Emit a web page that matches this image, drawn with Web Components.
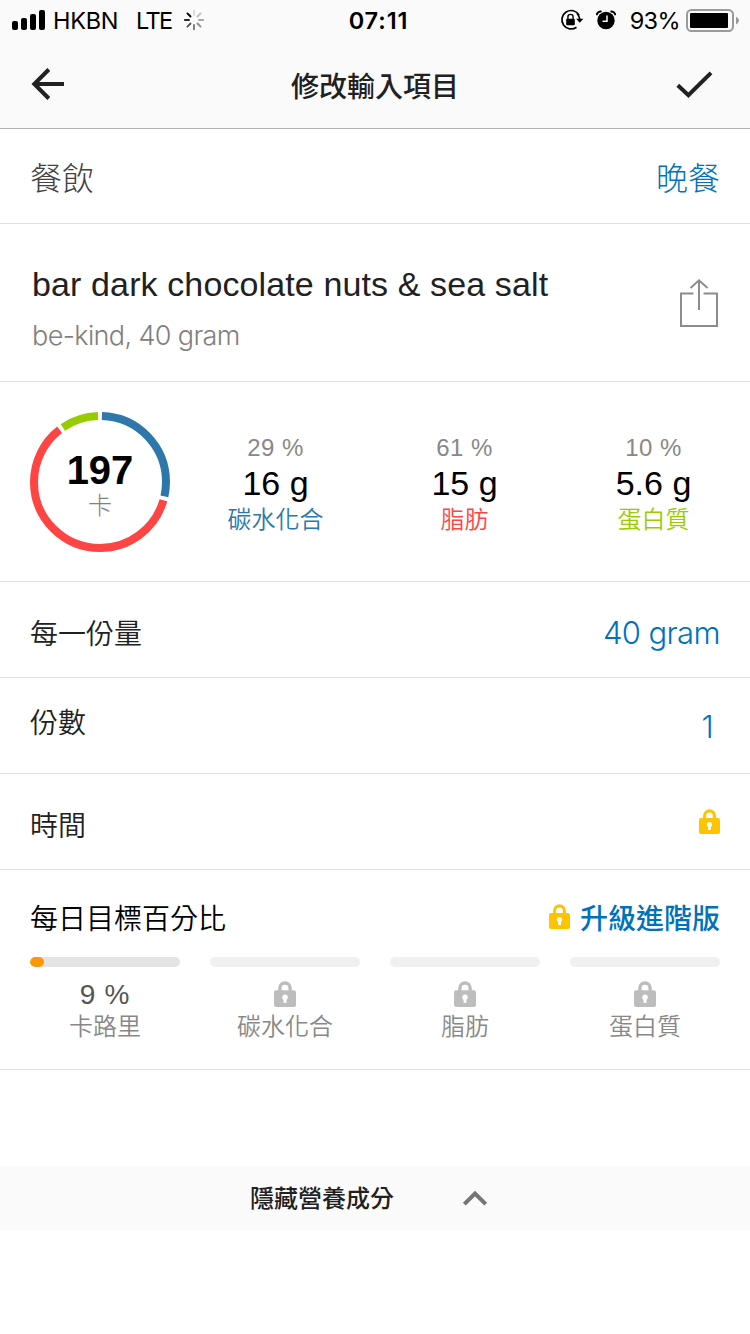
<!DOCTYPE html>
<html lang="zh-Hant">
<head>
<meta charset="utf-8">
<title>修改輸入項目</title>
<style>
  body {
    margin: 0;
    background: #fff;
    color: #212121;
    font-family: "Liberation Sans", "Noto Sans CJK TC", sans-serif;
  }
</style>
</head>
<body>
<food-entry-page></food-entry-page>

<script>
// small helper shared by all elements
function shadow(el, html) {
  el.attachShadow({ mode: 'open' }).innerHTML = html;
}

class StatusBar extends HTMLElement {
  connectedCallback() {
    shadow(this, `
      <style>
        :host {
          display: grid;
          grid-template-columns: 1fr auto 1fr;
          height: 40px;
          line-height: 41px;
          padding: 0 11px 0 12px;
          color: #000;
          font-family: Inter, sans-serif;
          font-size: 23.5px;
        }
        div { display: flex; white-space: pre; }
        svg { display: block; flex: none; }
        .carrier { width: 65px; margin-left: 7px; letter-spacing: -0.3px; }
        .network { width: 36px; margin-left: 18px; letter-spacing: -1.6px; }
        .spinner { margin-left: 12px; }
        .time { margin-left: 6px; font-weight: 600; letter-spacing: 0.9px; }
        .right { justify-content: flex-end; }
        .percent { margin: 0 6px 0 14px; letter-spacing: -0.6px; }
      </style>
      <div>
        <svg width="34" height="40">
          <rect x="0" y="21" width="6" height="9" rx="2"/>
          <rect x="9" y="18" width="6" height="12" rx="2"/>
          <rect x="18" y="14" width="6" height="16" rx="2"/>
          <rect x="27" y="10" width="6" height="20" rx="2"/>
        </svg>
        <span class="carrier">HKBN</span>
        <span class="network">LTE</span>
        <svg class="spinner" width="20" height="40" viewBox="-10 -20 20 40" stroke-width="1.9" stroke-linecap="round" stroke="#000">
          <path d="M0-5V-9.2" opacity=".12"/>
          <path d="M3.5-3.5L6.6-6.6" opacity=".22"/>
          <path d="M5 0H9.2" opacity=".32"/>
          <path d="M3.5 3.5L6.6 6.6" opacity=".42"/>
          <path d="M0 5V9.2" opacity=".52"/>
          <path d="M-3.5 3.5L-6.6 6.6" opacity=".65"/>
          <path d="M-5 0H-9.2" opacity=".85"/>
          <path d="M-3.5-3.5L-6.6-6.6"/>
        </svg>
      </div>
      <div class="time">07:11</div>
      <div class="right">
        <svg width="24" height="40">
          <path d="M19 15A9.2 9.2 0 1 0 16.5 27.2" fill="none" stroke="#000" stroke-width="1.7"/>
          <path d="M19.6 21.5V18.5A9.2 9.2 0 0 0 17 13.3" fill="none" stroke="#000" stroke-width="1.7"/>
          <path d="M16.2 18.8H23.4L19.8 22.7Z"/>
          <rect x="6.2" y="18.7" width="8.6" height="6.6" rx="1"/>
          <path d="M7.9 19V17a2.6 2.6 0 0 1 5.2 0V19" fill="none" stroke="#000" stroke-width="1.4"/>
        </svg>
        <svg width="20" height="40" style="margin-left:12px">
          <circle cx="10" cy="20.5" r="8.7"/>
          <path d="M.7 15.2A4 4 0 0 1 5.6 11.6M19.3 15.2A4 4 0 0 0 14.4 11.6" fill="none" stroke="#000" stroke-width="2"/>
          <path d="M11 15.5V21.3H6.5" fill="none" stroke="#fafafa" stroke-width="1.5"/>
        </svg>
        <span class="percent">93%</span>
        <svg width="53" height="40">
          <rect x="1" y="10" width="46" height="21" rx="4.5" fill="none" stroke="#9b9b9b" stroke-width="2"/>
          <rect x="4" y="13" width="38" height="15" rx="1"/>
          <path d="M50 16.5Q53 18.5 53 20.5T50 24.5Z" fill="#9b9b9b"/>
        </svg>
      </div>
    `);
  }
}

class NavBar extends HTMLElement {
  connectedCallback() {
    shadow(this, `
      <style>
        :host {
          display: grid;
          grid-template-columns: 36px 1fr 38px;
          height: 88px;
          padding: 0 37px 0 31px;
          border-bottom: 1px solid #b2b2b2;
        }
        h1 {
          margin: 0;
          padding-left: 8px;
          font-size: 28px;
          font-weight: 500;
          line-height: 96px;
          text-align: center;
        }
        svg { display: block; fill: none; stroke: #212121; }
      </style>
      <svg width="36" height="88"><path d="M33 44H4M17.8 29.5L3.3 44L17.8 58.5" stroke-width="4"/></svg>
      <h1><slot></slot></h1>
      <svg width="38" height="88"><path d="M2.8 45.3L13.4 55.2L36 32.8" stroke-width="4"/></svg>
    `);
  }
}

class LockIcon extends HTMLElement {
  connectedCallback() {
    shadow(this, `
      <style>
        :host { display: block; color: #ffc400; }
        svg { display: block; width: var(--lock-width, 21px); height: var(--lock-height, 25px); }
      </style>
      <svg viewBox="0 0 21 25" preserveAspectRatio="none">
        <path d="M5.6 11V6.8a4.9 4.9 0 0 1 9.8 0V11" fill="none" stroke="currentColor" stroke-width="3.2"/>
        <rect y="9" width="21" height="16" rx="2" fill="currentColor"/>
        <circle cx="10.5" cy="15.6" r="2.6" fill="#fff"/>
        <path d="M9.1 16h2.8v5h-2.8z" fill="#fff"/>
      </svg>
    `);
  }
}

class EntryRow extends HTMLElement {
  connectedCallback() {
    shadow(this, `
      <style>
        :host {
          display: flex;
          justify-content: space-between;
          box-sizing: border-box;
          height: 96px;
          padding: 0 30px;
          border-bottom: 1px solid #e0e0e0;
          font-size: 28px;
          font-weight: 350;
          line-height: 40px;
        }
        .label { padding-top: var(--label-top, 33px); }
        .value {
          padding-top: var(--value-top, 31px);
          color: #0072bc;
          font-family: Inter, "Noto Sans CJK TC", sans-serif;
          font-size: var(--value-size, 31px);
          font-weight: 300;
          letter-spacing: var(--value-spacing, -0.6px);
        }
      </style>
      <div class="label">${this.getAttribute('label')}</div>
      <div class="value"><slot></slot></div>
    `);
  }
}

class FoodTitle extends HTMLElement {
  connectedCallback() {
    shadow(this, `
      <style>
        :host {
          display: flex;
          justify-content: space-between;
          box-sizing: border-box;
          height: 158px;
          padding: 39px 32px 0 32px;
          border-bottom: 1px solid #e0e0e0;
        }
        .name { font-size: 34px; line-height: 42px; letter-spacing: 0.12px; }
        .brand {
          margin-top: 10px;
          color: #808080;
          font-family: Inter, sans-serif;
          font-size: 27px;
          font-weight: 300;
          line-height: 42px;
          letter-spacing: -0.62px;
        }
        svg { display: block; margin-top: 15px; fill: none; stroke: #8c8c8c; stroke-width: 2; }
      </style>
      <div>
        <div class="name"><slot name="name"></slot></div>
        <div class="brand"><slot name="brand"></slot></div>
      </div>
      <svg width="39" height="50">
        <path d="M14.5 15.5H2V48H38V15.5H24.5"/>
        <path d="M20 32V3M11.5 10L20 2.3L28.5 10"/>
      </svg>
    `);
  }
}

class CalorieRing extends HTMLElement {
  connectedCallback() {
    const parts = [
      [0, 29, '#2e77ab'],
      [29, 61, '#ff4444'],
      [90, 10, '#99cc00'],
    ];
    const arcs = parts
      .map(
        ([start, size, color]) =>
          `<circle cx="70" cy="70" r="66" pathLength="100" stroke="${color}"
            stroke-dasharray="${size - 0.96} 100" stroke-dashoffset="${-(start + 0.48)}"/>`
      )
      .join('');
    shadow(this, `
      <style>
        :host { display: grid; width: 140px; height: 140px; text-align: center; }
        svg, div { grid-area: 1 / 1; }
        circle { fill: none; stroke-width: 8; }
        .total { padding-top: 37px; color: #000; font-size: 40px; font-weight: 700; line-height: 42px; }
        .unit { color: #808080; font-size: 24px; font-weight: 300; line-height: 30px; }
      </style>
      <svg width="140" height="140"><g transform="rotate(-90 70 70)">${arcs}</g></svg>
      <div>
        <div class="total"><slot></slot></div>
        <div class="unit">卡</div>
      </div>
    `);
  }
}

class MacroStat extends HTMLElement {
  connectedCallback() {
    shadow(this, `
      <style>
        :host { display: block; text-align: center; font-size: 24px; }
        .percent { color: #888; line-height: 30px; letter-spacing: 0.5px; }
        .amount { color: #000; font-size: 34px; line-height: 40px; }
        .name { color: var(--macro); font-weight: 350; line-height: 33px; }
      </style>
      <div class="percent">${this.getAttribute('percent')} %</div>
      <div class="amount">${this.getAttribute('amount')} g</div>
      <div class="name"><slot></slot></div>
    `);
  }
}

class GoalMeter extends HTMLElement {
  connectedCallback() {
    const percent = this.getAttribute('percent');
    shadow(this, `
      <style>
        :host { display: block; text-align: center; }
        .track { height: 10px; border-radius: 5px; background: ${percent ? '#e4e4e4' : '#f0f0f0'}; overflow: hidden; }
        .fill { width: ${percent || 0}%; height: 10px; border-radius: 5px; background: #ff9800; }
        .value {
          display: flex;
          justify-content: center;
          height: 30px;
          padding-top: 13px;
          color: #555;
          font-size: 28px;
          line-height: 30px;
          letter-spacing: 0.8px;
        }
        lock-icon { color: #bdbdbd; padding-top: 1px; --lock-width: 22px; --lock-height: 26px; }
        .name { color: #888; font-size: 24px; font-weight: 350; line-height: 33px; }
      </style>
      <div class="track"><div class="fill"></div></div>
      <div class="value">${percent ? percent + ' %' : '<lock-icon></lock-icon>'}</div>
      <div class="name"><slot></slot></div>
    `);
  }
}

class DailyGoals extends HTMLElement {
  connectedCallback() {
    shadow(this, `
      <style>
        :host {
          display: block;
          box-sizing: border-box;
          height: 200px;
          padding: 30px 30px 0;
          border-bottom: 1px solid #e0e0e0;
          font-size: 28px;
          font-weight: 350;
          line-height: 40px;
        }
        header { display: flex; justify-content: space-between; height: 57px; color: #000; }
        .upgrade { display: flex; gap: 10px; color: #0072bc; font-weight: 500; }
        lock-icon { padding-top: 4px; }
        .meters { display: grid; grid-template-columns: repeat(4, 150px); gap: 30px; }
      </style>
      <header>
        <span>每日目標百分比</span>
        <div class="upgrade"><lock-icon></lock-icon>升級進階版</div>
      </header>
      <div class="meters"><slot></slot></div>
    `);
  }
}

class ToggleBar extends HTMLElement {
  connectedCallback() {
    shadow(this, `
      <style>
        :host {
          display: flex;
          height: 64px;
          margin-top: 96px;
          padding-left: 250px;
          background: #fafafa;
          font-size: 24px;
          font-weight: 500;
          line-height: 66px;
        }
        svg { margin-left: 68px; }
      </style>
      <slot></slot>
      <svg width="26" height="64"><path d="M2.3 38.2L13 27.5L23.7 38.2" fill="none" stroke="#757575" stroke-width="4"/></svg>
    `);
  }
}

class FoodEntryPage extends HTMLElement {
  connectedCallback() {
    shadow(this, `
      <style>
        :host { display: block; width: 750px; height: 1334px; overflow: hidden; }
        .top { background: #fafafa; }
        .meal {
          height: 95px;
          color: #424242;
          font-size: 32px;
          font-weight: 300;
          --label-top: 30px;
          --value-top: 30px;
          --value-size: 32px;
          --value-spacing: 0;
        }
        .macros {
          display: grid;
          grid-template-columns: 151px repeat(3, 189px);
          box-sizing: border-box;
          height: 200px;
          padding: 30px 0 0 30px;
          border-bottom: 1px solid #e0e0e0;
        }
        macro-stat { padding-top: 21px; }
        .servings { padding-right: 37px; --label-top: 26px; --value-top: 29px; }
        .time { --value-top: 35px; }
      </style>
      <div class="top">
        <status-bar></status-bar>
        <nav-bar>修改輸入項目</nav-bar>
      </div>
      <entry-row class="meal" label="餐飲">晚餐</entry-row>
      <food-title>
        <span slot="name">bar dark chocolate nuts &amp; sea salt</span>
        <span slot="brand">be-kind, 40 gram</span>
      </food-title>
      <div class="macros">
        <calorie-ring>197</calorie-ring>
        <macro-stat percent="29" amount="16" style="--macro:#2e77ab">碳水化合</macro-stat>
        <macro-stat percent="61" amount="15" style="--macro:#ff4444">脂肪</macro-stat>
        <macro-stat percent="10" amount="5.6" style="--macro:#99cc00">蛋白質</macro-stat>
      </div>
      <entry-row label="每一份量">40 gram</entry-row>
      <entry-row class="servings" label="份數">1</entry-row>
      <entry-row class="time" label="時間"><lock-icon></lock-icon></entry-row>
      <daily-goals>
        <goal-meter percent="9">卡路里</goal-meter>
        <goal-meter>碳水化合</goal-meter>
        <goal-meter>脂肪</goal-meter>
        <goal-meter>蛋白質</goal-meter>
      </daily-goals>
      <toggle-bar>隱藏營養成分</toggle-bar>
    `);
  }
}

customElements.define('status-bar', StatusBar);
customElements.define('nav-bar', NavBar);
customElements.define('lock-icon', LockIcon);
customElements.define('entry-row', EntryRow);
customElements.define('food-title', FoodTitle);
customElements.define('calorie-ring', CalorieRing);
customElements.define('macro-stat', MacroStat);
customElements.define('goal-meter', GoalMeter);
customElements.define('daily-goals', DailyGoals);
customElements.define('toggle-bar', ToggleBar);
customElements.define('food-entry-page', FoodEntryPage);
</script>
</body>
</html>
